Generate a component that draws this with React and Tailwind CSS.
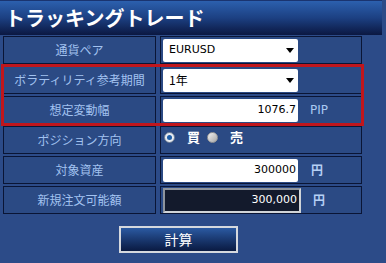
import React from "react";

function Arrow() {
  return (
    <svg width="8" height="5" viewBox="0 0 8 5" className="absolute right-[4px] top-[9px]">
      <path d="M0 0 H8 L4 5 Z" fill="#000" />
    </svg>
  );
}

function Label({ children }) {
  return (
    <div className="h-[28px] border border-[#0a1535] bg-[#2b4a84] flex items-center justify-center text-[12px] text-[#a2c2f0]">
      {children}
    </div>
  );
}

function Value({ children, className = "items-center" }) {
  return (
    <div className={`h-[28px] border border-[#0a1535] bg-[#2b4a84] flex pl-[2px] ${className}`}>
      {children}
    </div>
  );
}

export default function App() {
  return (
    <div className="relative w-[386px] h-[263px] overflow-hidden bg-[#2c4b88] font-['Noto_Sans_CJK_JP','Noto_Sans',sans-serif]">
      <div className="h-[35px] w-[382px] bg-gradient-to-b from-[#2c60ae] via-[#1c4082] to-[#0b1842] border-t border-[#1a3470] flex items-center pl-[5px]">
        <span className="text-[20px] font-bold text-white leading-none">
          トラッキングトレード
        </span>
      </div>

      <div className="mt-[1px] ml-[3px] grid grid-cols-[153px_202px] gap-x-[4px] gap-y-[2px]">
        <Label>通貨ペア</Label>
        <Value>
          <div className="relative h-[23px] w-[135px] bg-white rounded-[2px] flex items-center pl-[6px] text-[11px] text-black font-['DejaVu_Sans',sans-serif]">
            EURUSD
            <Arrow />
          </div>
        </Value>

        <Label>ボラティリティ参考期間</Label>
        <Value>
          <div className="relative h-[23px] w-[135px] bg-white rounded-[2px] flex items-center pl-[6px] text-[12px] text-black">
            1年
            <Arrow />
          </div>
        </Value>

        <Label>想定変動幅</Label>
        <Value>
          <div className="h-[23px] w-[135px] bg-white rounded-[2px] flex items-center justify-end pr-[2px] text-[11px] text-black font-['DejaVu_Sans',sans-serif]">
            1076.7
          </div>
          <span className="ml-[12px] text-[12px] text-[#a9c9f2] font-['DejaVu_Sans',sans-serif]">PIP</span>
        </Value>

        <Label>ポジション方向</Label>
        <Value className="items-start pt-[2px]">
          <div className="flex items-center h-[16px] text-[13px] text-white">
            <span className="ml-[1px] w-[11px] h-[11px] rounded-full bg-[#e8ecf2] border border-[#6a7a90] flex items-center justify-center">
              <span className="w-[5px] h-[5px] rounded-full bg-[#1e5fa8]" />
            </span>
            <span className="ml-[12px] font-bold">買</span>
            <span className="ml-[7px] w-[11px] h-[11px] rounded-full bg-gradient-to-br from-[#f2f2f2] to-[#a8a8a8] border border-[#9a9a9a]" />
            <span className="ml-[12px] font-bold">売</span>
          </div>
        </Value>

        <Label>対象資産</Label>
        <Value>
          <div className="h-[23px] w-[135px] bg-white rounded-[2px] flex items-center justify-end pr-[2px] text-[11px] text-black font-['DejaVu_Sans',sans-serif]">
            300000
          </div>
          <span className="ml-[13px] text-[12px] font-bold text-[#b5d0f5]">円</span>
        </Value>

        <Label>新規注文可能額</Label>
        <Value>
          <div className="h-[25px] w-[138px] bg-[#131a2c] border-2 border-t-[#8e949c] border-l-[#8e949c] border-r-[#d0d4d8] border-b-[#d0d4d8] flex items-center justify-end pr-[2px] text-[11px] text-white font-['DejaVu_Sans',sans-serif]">
            300,000
          </div>
          <span className="ml-[12px] text-[12px] font-bold text-[#b5d0f5]">円</span>
        </Value>
      </div>

      <div className="mt-[12px] ml-[119px] w-[119px] h-[27px] border-2 border-[#d6d9de] bg-gradient-to-b from-[#2b5aa2] to-[#0a1a42] flex items-center justify-center text-[14px] text-white">
        計算
      </div>

      <div className="absolute left-[1px] top-[64px] w-[363px] h-[62px] border-[3px] border-[#c0161c] pointer-events-none" />
    </div>
  );
}
